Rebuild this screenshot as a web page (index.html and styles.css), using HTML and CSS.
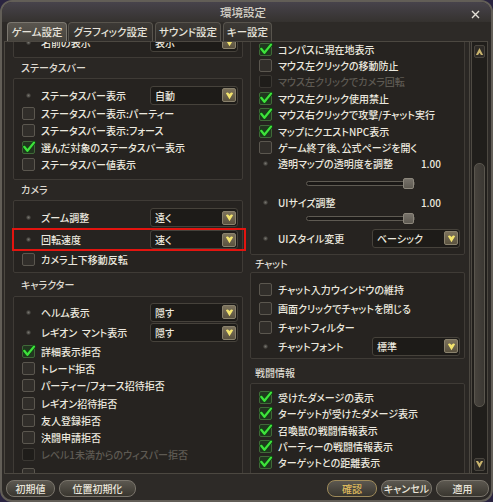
FILE: index.html
```html
<!DOCTYPE html>
<html lang="ja">
<head>
    <meta charset="UTF-8">
    <title>環境設定</title>
    <link rel="stylesheet" href="styles.css">
</head>
<body>
<div class="window">
    <div class="titlebar">
        <span></span>
        <span class="title">環境設定</span>
        <span class="close"><svg width="9" height="9" viewBox="0 0 9 9"><path d="M1 1L8 8M8 1L1 8" stroke="#e4e0d8" stroke-width="1.4"/></svg></span>
    </div>

    <div class="tabs">
        <div class="tab active t-game">ゲーム設定</div>
        <div class="tab t-gfx">グラフィック設定</div>
        <div class="tab t-sound">サウンド設定</div>
        <div class="tab t-key">キー設定</div>
    </div>

    <div class="panel">
        <div class="view">
            <div class="scroll">
                <!-- left column -->
                <div class="col left">
                    <div class="box cut">
                        <div class="row drop">
                            <span class="dot"></span><span class="label">名前の表示</span>
                            <div class="select"><span>表示</span><span class="arrow"><svg width="9" height="9" viewBox="0 0 10 10"><path d="M1 2.6C2 1 4 1.4 5 3.4 6 1.4 8 1 9 2.6L5 9.2Z" fill="#f3e46e"/></svg></span></div>
                        </div>
                    </div>
                    <div class="head">ステータスバー</div>
                    <div class="box status">
                        <div class="row drop">
                            <span class="dot"></span><span class="label">ステータスバー表示</span>
                            <div class="select"><span>自動</span><span class="arrow"><svg width="9" height="9" viewBox="0 0 10 10"><path d="M1 2.6C2 1 4 1.4 5 3.4 6 1.4 8 1 9 2.6L5 9.2Z" fill="#f3e46e"/></svg></span></div>
                        </div>
                        <div class="row"><span class="cb"></span><span class="label">ステータスバー表示:パーティー</span></div>
                        <div class="row"><span class="cb"></span><span class="label">ステータスバー表示:フォース</span></div>
                        <div class="row"><span class="cb on"><svg width="14" height="14" viewBox="0 0 14 14"><path d="M2.2 6.8L5.4 10.8L12 2.6" fill="none" stroke="#0f4a12" stroke-width="3.8" stroke-linecap="round" stroke-linejoin="round"/><path d="M2.2 6.8L5.4 10.8L12 2.6" fill="none" stroke="#3fe23c" stroke-width="2.2" stroke-linecap="round" stroke-linejoin="round"/></svg></span><span class="label">選んだ対象のステータスバー表示</span></div>
                        <div class="row"><span class="cb"></span><span class="label">ステータスバー値表示</span></div>
                    </div>
                    <div class="head">カメラ</div>
                    <div class="box camera">
                        <div class="row drop first">
                            <span class="dot"></span><span class="label">ズーム調整</span>
                            <div class="select"><span>遠く</span><span class="arrow"><svg width="9" height="9" viewBox="0 0 10 10"><path d="M1 2.6C2 1 4 1.4 5 3.4 6 1.4 8 1 9 2.6L5 9.2Z" fill="#f3e46e"/></svg></span></div>
                        </div>
                        <div class="row drop mark">
                            <span class="dot"></span><span class="label">回転速度</span>
                            <div class="select"><span>速く</span><span class="arrow"><svg width="9" height="9" viewBox="0 0 10 10"><path d="M1 2.6C2 1 4 1.4 5 3.4 6 1.4 8 1 9 2.6L5 9.2Z" fill="#f3e46e"/></svg></span></div>
                        </div>
                        <div class="row"><span class="cb"></span><span class="label">カメラ上下移動反転</span></div>
                    </div>
                    <div class="head tight">キャラクター</div>
                    <div class="box chara">
                        <div class="row drop">
                            <span class="dot"></span><span class="label">ヘルム表示</span>
                            <div class="select"><span>隠す</span><span class="arrow"><svg width="9" height="9" viewBox="0 0 10 10"><path d="M1 2.6C2 1 4 1.4 5 3.4 6 1.4 8 1 9 2.6L5 9.2Z" fill="#f3e46e"/></svg></span></div>
                        </div>
                        <div class="row drop first">
                            <span class="dot"></span><span class="label">レギオン&nbsp;&nbsp;マント表示</span>
                            <div class="select"><span>隠す</span><span class="arrow"><svg width="9" height="9" viewBox="0 0 10 10"><path d="M1 2.6C2 1 4 1.4 5 3.4 6 1.4 8 1 9 2.6L5 9.2Z" fill="#f3e46e"/></svg></span></div>
                        </div>
                        <div class="row"><span class="cb on"><svg width="14" height="14" viewBox="0 0 14 14"><path d="M2.2 6.8L5.4 10.8L12 2.6" fill="none" stroke="#0f4a12" stroke-width="3.8" stroke-linecap="round" stroke-linejoin="round"/><path d="M2.2 6.8L5.4 10.8L12 2.6" fill="none" stroke="#3fe23c" stroke-width="2.2" stroke-linecap="round" stroke-linejoin="round"/></svg></span><span class="label">詳細表示拒否</span></div>
                        <div class="row"><span class="cb"></span><span class="label">トレード拒否</span></div>
                        <div class="row"><span class="cb"></span><span class="label">パーティー/フォース招待拒否</span></div>
                        <div class="row"><span class="cb"></span><span class="label">レギオン招待拒否</span></div>
                        <div class="row"><span class="cb"></span><span class="label">友人登録拒否</span></div>
                        <div class="row"><span class="cb"></span><span class="label">決闘申請拒否</span></div>
                        <div class="row off"><span class="cb"></span><span class="label">レベル1未満からのウィスパー拒否</span></div>
                        <div class="row last"><span class="cb"></span></div>
                    </div>
                </div>

                <!-- right column -->
                <div class="col right">
                    <div class="box general">
                        <div class="row"><span class="cb on"><svg width="14" height="14" viewBox="0 0 14 14"><path d="M2.2 6.8L5.4 10.8L12 2.6" fill="none" stroke="#0f4a12" stroke-width="3.8" stroke-linecap="round" stroke-linejoin="round"/><path d="M2.2 6.8L5.4 10.8L12 2.6" fill="none" stroke="#3fe23c" stroke-width="2.2" stroke-linecap="round" stroke-linejoin="round"/></svg></span><span class="label">コンパスに現在地表示</span></div>
                        <div class="row"><span class="cb"></span><span class="label">マウス左クリックの移動防止</span></div>
                        <div class="row off"><span class="cb"></span><span class="label">マウス左クリックでカメラ回転</span></div>
                        <div class="row"><span class="cb on"><svg width="14" height="14" viewBox="0 0 14 14"><path d="M2.2 6.8L5.4 10.8L12 2.6" fill="none" stroke="#0f4a12" stroke-width="3.8" stroke-linecap="round" stroke-linejoin="round"/><path d="M2.2 6.8L5.4 10.8L12 2.6" fill="none" stroke="#3fe23c" stroke-width="2.2" stroke-linecap="round" stroke-linejoin="round"/></svg></span><span class="label">マウス左クリック使用禁止</span></div>
                        <div class="row"><span class="cb on"><svg width="14" height="14" viewBox="0 0 14 14"><path d="M2.2 6.8L5.4 10.8L12 2.6" fill="none" stroke="#0f4a12" stroke-width="3.8" stroke-linecap="round" stroke-linejoin="round"/><path d="M2.2 6.8L5.4 10.8L12 2.6" fill="none" stroke="#3fe23c" stroke-width="2.2" stroke-linecap="round" stroke-linejoin="round"/></svg></span><span class="label">マウス右クリックで攻撃/チャット実行</span></div>
                        <div class="row"><span class="cb on"><svg width="14" height="14" viewBox="0 0 14 14"><path d="M2.2 6.8L5.4 10.8L12 2.6" fill="none" stroke="#0f4a12" stroke-width="3.8" stroke-linecap="round" stroke-linejoin="round"/><path d="M2.2 6.8L5.4 10.8L12 2.6" fill="none" stroke="#3fe23c" stroke-width="2.2" stroke-linecap="round" stroke-linejoin="round"/></svg></span><span class="label">マップにクエストNPC表示</span></div>
                        <div class="row"><span class="cb"></span><span class="label">ゲーム終了後､公式ページを開く</span></div>
                        <div class="row"><span class="dot"></span><span class="label">透明マップの透明度を調整</span><span class="val">1.00</span></div>
                        <div class="row slide"><div class="track"><div class="knob"></div></div></div>
                        <div class="row low"><span class="dot"></span><span class="label">UIサイズ調整</span><span class="val">1.00</span></div>
                        <div class="row slide short"><div class="track"><div class="knob"></div></div></div>
                        <div class="row drop wide">
                            <span class="dot"></span><span class="label">UIスタイル変更</span>
                            <div class="select"><span>ベーシック</span><span class="arrow"><svg width="9" height="9" viewBox="0 0 10 10"><path d="M1 2.6C2 1 4 1.4 5 3.4 6 1.4 8 1 9 2.6L5 9.2Z" fill="#f3e46e"/></svg></span></div>
                        </div>
                    </div>
                    <div class="head small">チャット</div>
                    <div class="box chat">
                        <div class="row"><span class="cb"></span><span class="label">チャット入力ウインドウの維持</span></div>
                        <div class="row"><span class="cb"></span><span class="label">画面クリックでチャットを閉じる</span></div>
                        <div class="row"><span class="cb"></span><span class="label">チャットフィルター</span></div>
                        <div class="row drop">
                            <span class="dot"></span><span class="label">チャットフォント</span>
                            <div class="select"><span>標準</span><span class="arrow"><svg width="9" height="9" viewBox="0 0 10 10"><path d="M1 2.6C2 1 4 1.4 5 3.4 6 1.4 8 1 9 2.6L5 9.2Z" fill="#f3e46e"/></svg></span></div>
                        </div>
                    </div>
                    <div class="head tall">戦闘情報</div>
                    <div class="box battle">
                        <div class="row"><span class="cb on"><svg width="14" height="14" viewBox="0 0 14 14"><path d="M2.2 6.8L5.4 10.8L12 2.6" fill="none" stroke="#0f4a12" stroke-width="3.8" stroke-linecap="round" stroke-linejoin="round"/><path d="M2.2 6.8L5.4 10.8L12 2.6" fill="none" stroke="#3fe23c" stroke-width="2.2" stroke-linecap="round" stroke-linejoin="round"/></svg></span><span class="label">受けたダメージの表示</span></div>
                        <div class="row"><span class="cb on"><svg width="14" height="14" viewBox="0 0 14 14"><path d="M2.2 6.8L5.4 10.8L12 2.6" fill="none" stroke="#0f4a12" stroke-width="3.8" stroke-linecap="round" stroke-linejoin="round"/><path d="M2.2 6.8L5.4 10.8L12 2.6" fill="none" stroke="#3fe23c" stroke-width="2.2" stroke-linecap="round" stroke-linejoin="round"/></svg></span><span class="label">ターゲットが受けたダメージ表示</span></div>
                        <div class="row"><span class="cb on"><svg width="14" height="14" viewBox="0 0 14 14"><path d="M2.2 6.8L5.4 10.8L12 2.6" fill="none" stroke="#0f4a12" stroke-width="3.8" stroke-linecap="round" stroke-linejoin="round"/><path d="M2.2 6.8L5.4 10.8L12 2.6" fill="none" stroke="#3fe23c" stroke-width="2.2" stroke-linecap="round" stroke-linejoin="round"/></svg></span><span class="label">召喚獣の戦闘情報表示</span></div>
                        <div class="row"><span class="cb on"><svg width="14" height="14" viewBox="0 0 14 14"><path d="M2.2 6.8L5.4 10.8L12 2.6" fill="none" stroke="#0f4a12" stroke-width="3.8" stroke-linecap="round" stroke-linejoin="round"/><path d="M2.2 6.8L5.4 10.8L12 2.6" fill="none" stroke="#3fe23c" stroke-width="2.2" stroke-linecap="round" stroke-linejoin="round"/></svg></span><span class="label">パーティーの戦闘情報表示</span></div>
                        <div class="row"><span class="cb on"><svg width="14" height="14" viewBox="0 0 14 14"><path d="M2.2 6.8L5.4 10.8L12 2.6" fill="none" stroke="#0f4a12" stroke-width="3.8" stroke-linecap="round" stroke-linejoin="round"/><path d="M2.2 6.8L5.4 10.8L12 2.6" fill="none" stroke="#3fe23c" stroke-width="2.2" stroke-linecap="round" stroke-linejoin="round"/></svg></span><span class="label">ターゲットとの距離表示</span></div>
                    </div>
                </div>
            </div>
        </div>

        <div class="scrollbar">
            <div class="rail">
                <span class="sbtn"><svg width="9" height="9" viewBox="0 0 10 10"><path d="M5 1L9 9H6.6L5 6.4 3.4 9H1Z" fill="#c9b46e"/></svg></span>
                <span class="thumb"></span>
                <span class="sbtn down"><svg width="9" height="9" viewBox="0 0 10 10"><path d="M5 9L9 1H6.6L5 3.6 3.4 1H1Z" fill="#c9b46e"/></svg></span>
            </div>
        </div>
    </div>

    <div class="footer">
        <div class="btns">
            <button class="btn w49">初期値</button>
            <button class="btn w77">位置初期化</button>
        </div>
        <div class="btns">
            <button class="btn ok w50">確認</button>
            <button class="btn w51">キャンセル</button>
            <button class="btn w53">適用</button>
        </div>
    </div>
</div>
</body>
</html>
```

FILE: styles.css
```css
* {
    box-sizing: border-box;
}

body {
    margin: 0;
    background: #2a2440;
    font-family: "Noto Sans CJK JP", "Noto Sans", sans-serif;
    font-size: 10px;
    font-weight: 500;
    color: #ebe8df;
    font-feature-settings: "palt";
}

.window {
    width: 493px;
    height: 502px;
    border: 2px solid #625e57;
    border-radius: 12px;
    background: #2d2a27;
    display: flex;
    flex-direction: column;
    overflow: hidden;
}

/* title */
.titlebar {
    height: 20px;
    display: grid;
    grid-template-columns: 1fr auto 1fr;
    align-items: center;
    background: linear-gradient(#47434b, #35322f);
}

.title {
    font-size: 11.5px;
    color: #d4d0c6;
    margin-right: 7px;
}

.close {
    justify-self: end;
    margin: 4px 11px 0 0;
    display: flex;
}

/* tabs */
.tabs {
    display: flex;
    height: 19px;
    padding-left: 5px;
}

.tab {
    height: 19px;
    margin-right: 2px;
    border: 1px solid #58544d;
    border-bottom: none;
    border-radius: 4px 4px 0 0;
    background: linear-gradient(#3d3a36, #302d2a);
    line-height: 18px;
    text-align: center;
    font-size: 10.5px;
    color: #e6e3db;
    white-space: nowrap;
}

.tab.active {
    background: linear-gradient(#5a564f, #46433d);
    border-color: #7b776f;
}

.t-game { width: 60px; margin-right: 1px; }
.t-gfx { width: 85px; }
.t-sound { width: 66px; }
.t-key { width: 49px; }

/* main panel */
.panel {
    margin: 0 3px 0 2px;
    height: 433px;
    border: 1px solid #4c4841;
    background: #2a2724;
    display: flex;
}

.view {
    flex: 1;
    overflow: hidden;
    padding-left: 8px;
}

.scroll {
    display: flex;
    gap: 7px;
    margin-top: -20px;
}

.left {
    width: 230px;
}

.right {
    width: 215px;
}

.box {
    border: 1px solid #3f3b36;
    border-radius: 2px;
    background: #262320;
    padding: 6px 0;
}

.head {
    height: 20px;
    line-height: 20px;
    padding-left: 8px;
    color: #dedad1;
}

.head.tight {
    height: 23px;
    line-height: 23px;
}

.right .head {
    padding-left: 5px;
}

.head.small {
    height: 17px;
    line-height: 17px;
}

.head.tall {
    height: 24px;
    line-height: 18px;
    padding-top: 5px;
}

.box.cut {
    padding: 8px 0 4px;
}

.box.camera {
    padding-bottom: 4px;
}

.box.chara {
    padding-top: 5px;
}

.box.general {
    padding: 18px 0 4px;
}

.box.chat {
    padding: 7px 0 3px;
}

.box.battle {
    padding-top: 5px;
}

/* rows */
.row {
    display: flex;
    align-items: center;
    gap: 6px;
    height: 17px;
    padding-left: 8px;
    white-space: nowrap;
}

.chara .row {
    height: 17.2px;
}

.chara .row.last {
    align-items: flex-end;
}

.right .row {
    height: 16.4px;
}

.chat .row {
    height: 19px;
}

.row.drop {
    height: 20px;
}

.row.drop.first {
    height: 21px;
}

.cut .row.drop {
    height: 22px;
}

.row.drop.mark {
    height: 23px;
    position: relative;
}

.row.mark::after {
    content: "";
    position: absolute;
    left: -2px;
    right: -4px;
    top: 0;
    bottom: 0;
    border: 2px solid #e3140f;
}

.right .row.drop {
    height: 18px;
}

.right .row.drop.wide {
    height: 24px;
}

.row.off .label {
    color: #5e5a53;
}

.row.off .cb {
    background: #1f1d1a;
    border-color: #3b3833;
}

.cb {
    flex: none;
    width: 13px;
    height: 13px;
    border: 1px solid #5b574f;
    border-radius: 2px;
    background: #312e2a;
}

.cb.on {
    border-color: #3f6a38;
    background: #223520;
}

.cb svg {
    display: block;
    margin: -2px 0 0 -1px;
    overflow: visible;
}

.dot {
    flex: none;
    width: 13px;
    height: 5px;
    background: radial-gradient(circle at 50% 50%, #77756f 0, #4a4843 1.6px, transparent 2.6px);
}

.select {
    margin-left: auto;
    margin-right: 4px;
    width: 88px;
    height: 19px;
    border: 1px solid #46423b;
    border-radius: 3px;
    background: #1d1b18;
    display: flex;
    align-items: center;
    justify-content: space-between;
    padding: 0 1px 0 4px;
}

.arrow {
    width: 14px;
    height: 14px;
    border: 1px solid #8a826d;
    border-radius: 2px;
    background: linear-gradient(#7c725c, #5a523f);
    display: flex;
    align-items: center;
    justify-content: center;
}

.val {
    margin-left: auto;
    margin-right: 23px;
}

.row.low {
    height: 16px;
}

.row.slide {
    height: 22px;
    padding-left: 55px;
}

.row.slide.short {
    height: 16px;
}

.track {
    width: 109px;
    height: 5px;
    border: 1px solid #5f5b53;
    border-radius: 3px;
    background: #1b1917;
    display: flex;
    align-items: center;
    justify-content: flex-end;
}

.knob {
    flex: none;
    width: 11px;
    height: 11px;
    border: 1px solid #8c877c;
    border-radius: 2px;
    background: linear-gradient(#77726a, #5e5a52);
}

/* scrollbar */
.scrollbar {
    width: 18px;
    border-left: 1px solid #4b4740;
    padding-left: 1px;
}

.rail {
    height: 100%;
    border-left: 1px solid #4e4a43;
    background: #201e1b;
    display: flex;
    flex-direction: column;
    align-items: center;
}

.sbtn {
    width: 11px;
    height: 13px;
    margin-top: 3px;
    border: 1px solid #4a463f;
    border-radius: 2px;
    background: #2e2b27;
    display: flex;
    align-items: center;
    justify-content: center;
}

.sbtn.down {
    margin: auto 0 2px;
}

.thumb {
    width: 11px;
    height: 244px;
    margin-top: 105px;
    border: 1px solid #5a564e;
    border-radius: 5px;
    background: linear-gradient(90deg, #47433d, #3b3833);
}

/* footer */
.footer {
    flex: 1;
    display: flex;
    justify-content: space-between;
    padding: 6px 2px 0 4px;
}

.btns {
    display: flex;
    gap: 4px;
}

.btn {
    height: 17px;
    padding: 0;
    border: 1px solid #7a756c;
    border-radius: 8px;
    background: linear-gradient(#5c5850, #39362f);
    color: #e8e4da;
    font-family: "Noto Sans CJK JP", sans-serif;
    font-size: 10px;
    font-weight: 500;
    font-feature-settings: "palt";
    line-height: 15px;
}

.btn.ok {
    color: #dcb85c;
    border-color: #9e8a5a;
}

.w49 { width: 49px; }
.w77 { width: 77px; }
.w50 { width: 50px; }
.w51 { width: 51px; }
.w53 { width: 53px; }
```
